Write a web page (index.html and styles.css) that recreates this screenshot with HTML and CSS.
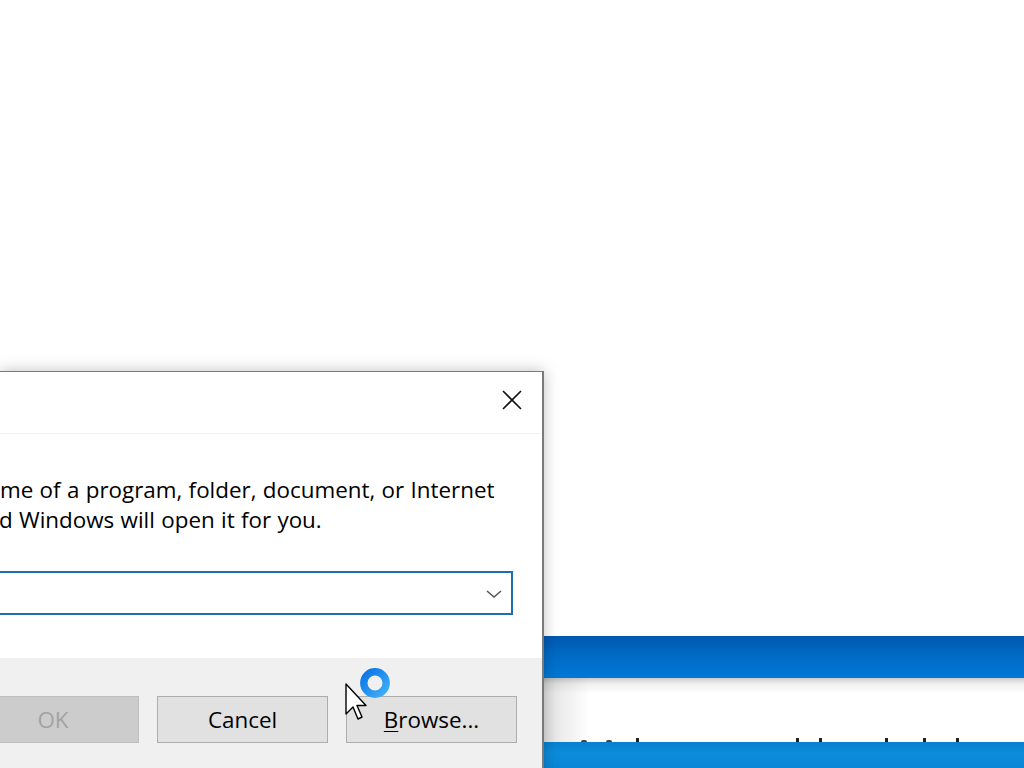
FILE: index.html
```
<!DOCTYPE html>
<html lang="en">
<head>
<meta charset="utf-8">
<title>Run</title>
<link rel="stylesheet" href="styles.css">
</head>
<body>
<div class="desktop">
  <div class="desk-top"></div>
  <div class="app-band"></div>
  <div class="app-body">
    <div class="marks">
      <span class="mark caret"></span><span class="mark caret"></span><span class="mark"></span><span class="mark"></span><span class="mark"></span><span class="mark"></span><span class="mark"></span><span class="mark"></span>
    </div>
  </div>
  <div class="taskbar"></div>
</div>

<div class="dialog">
  <div class="titlebar">
    <button class="close" aria-label="Close">
      <svg width="20" height="20" viewBox="0 0 20 20"><path d="M1 1L19 19M19 1L1 19" stroke="#111" stroke-width="1.6" fill="none"/></svg>
    </button>
  </div>
  <div class="content">
    <p class="prompt">me of a program, folder, document, or Internet<br><span class="cut">d</span> Windows will open it for you.</p>
    <div class="combo">
      <span class="combo-value"></span>
      <svg class="chev" width="16" height="8" viewBox="0 0 16 8"><path d="M1 1L8 7L15 1" stroke="#555" stroke-width="1.5" fill="none"/></svg>
    </div>
  </div>
  <div class="footer">
    <button class="btn ok" disabled>OK</button>
    <button class="btn cancel">Cancel</button>
    <button class="btn browse"><u>B</u>rowse...</button>
  </div>
</div>

<svg class="cursor" width="50" height="56" viewBox="0 0 50 56">
  <defs>
    <linearGradient id="ring" x1="0" y1="0" x2="1" y2="1">
      <stop offset="0" stop-color="#0b74e6"/>
      <stop offset="1" stop-color="#3fb0fa"/>
    </linearGradient>
  </defs>
  <path d="M1 17 L1 47 L8 40 L13 52 L17 50 L12 38.5 L21 38.5 Z" fill="#fff" stroke="#000" stroke-width="1.4" stroke-linejoin="round"/>
  <circle cx="30" cy="16" r="11.2" fill="none" stroke="url(#ring)" stroke-width="7.4"/>
</svg>
</body>
</html>
```
FILE: styles.css
```
* { box-sizing: border-box; }
html, body { margin: 0; padding: 0; }
body {
  width: 1024px;
  height: 768px;
  overflow: hidden;
  position: relative;
  background: #fff;
  font-family: "Open Sans", "Noto Sans", "DejaVu Sans", sans-serif;
}

.desktop { display: flex; flex-direction: column; height: 768px; }
.desk-top { height: 636px; background: #fff; }
.app-band {
  height: 42px;
  background: linear-gradient(to bottom, #0058b0 0%, #006bc6 45%, #0078d4 100%);
}
.app-body {
  height: 64px;
  display: flex;
  align-items: flex-end;
  background:
    linear-gradient(to bottom, rgba(0,0,0,0.2) 0, rgba(0,0,0,0.06) 6px, rgba(0,0,0,0) 16px),
    linear-gradient(to right, rgba(0,0,0,0) 543px, rgba(0,0,0,0.12) 543px, rgba(0,0,0,0) 590px),
    #fff;
}
.marks { display: flex; align-items: flex-end; padding-left: 581px; height: 6px; }
.mark { width: 3px; height: 4px; background: #222; }
.mark.caret { width: 6px; height: 2px; background: #444; border-radius: 2px 2px 0 0; }
.mark:nth-child(2) { margin-left: 19px; }
.mark:nth-child(3) { margin-left: 24px; }
.mark:nth-child(4) { margin-left: 157px; }
.mark:nth-child(5) { margin-left: 20px; }
.mark:nth-child(6) { margin-left: 63px; }
.mark:nth-child(7) { margin-left: 35px; }
.mark:nth-child(8) { margin-left: 30px; }
.taskbar {
  height: 26px;
  background: linear-gradient(to bottom, #0a7fcf 0, #0a8ddb 40%, #0a86d6 100%);
}

/* Run dialog window (desktop window) */
.dialog {
  position: absolute;
  left: 0;
  top: 371px;
  width: 544px;
  height: 420px;
  background: #fff;
  border: 1px solid #7a7a7a;
  border-left: none;
  border-right-width: 2px;
  box-shadow: 0 0 14px rgba(0,0,0,0.25);
  display: flex;
  flex-direction: column;
}
.titlebar {
  height: 62px;
  flex: none;
  display: flex;
  justify-content: flex-end;
  align-items: flex-start;
  padding: 18px 20px 0 0;
  border-bottom: 1px solid #f0f0f0;
}
.close {
  width: 20px; height: 20px; padding: 0; margin: 0;
  border: none; background: transparent; display: block;
}
.close svg { display: block; }

.content { flex: none; padding-top: 41px; height: 224px; }
.prompt {
  margin: 0;
  font-size: 22.4px;
  line-height: 30px;
  word-spacing: 0.5px;
  color: #000;
  white-space: nowrap;
}
.cut { margin-left: -1px; }
.combo {
  margin-top: 36px;
  width: 513px;
  height: 44px;
  border: 2px solid #1d6fb5;
  border-left: none;
  display: flex;
  align-items: center;
  justify-content: space-between;
  padding-right: 9px;
}
.chev { display: block; margin-top: 2px; }

.footer {
  flex: 1;
  overflow: hidden;
  background: #f0f0f0;
  display: flex;
  align-items: flex-start;
  gap: 18px;
  padding-top: 38px;
}
.btn {
  flex: none;
  height: 47px;
  font-family: inherit;
  font-size: 22.4px;
  color: #000;
  background: #e1e1e1;
  border: 1px solid #adadad;
  padding: 0;
  margin: 0;
}
.btn u { text-decoration-thickness: 1px; text-underline-offset: 3px; }
.ok { width: 172px; margin-left: -33px; background: #cccccc; border-color: #bfbfbf; color: #a3a3a3; }
.cancel { width: 171px; }
.browse { width: 171px; }

.cursor {
  position: absolute;
  left: 345px;
  top: 667px;
}
```
